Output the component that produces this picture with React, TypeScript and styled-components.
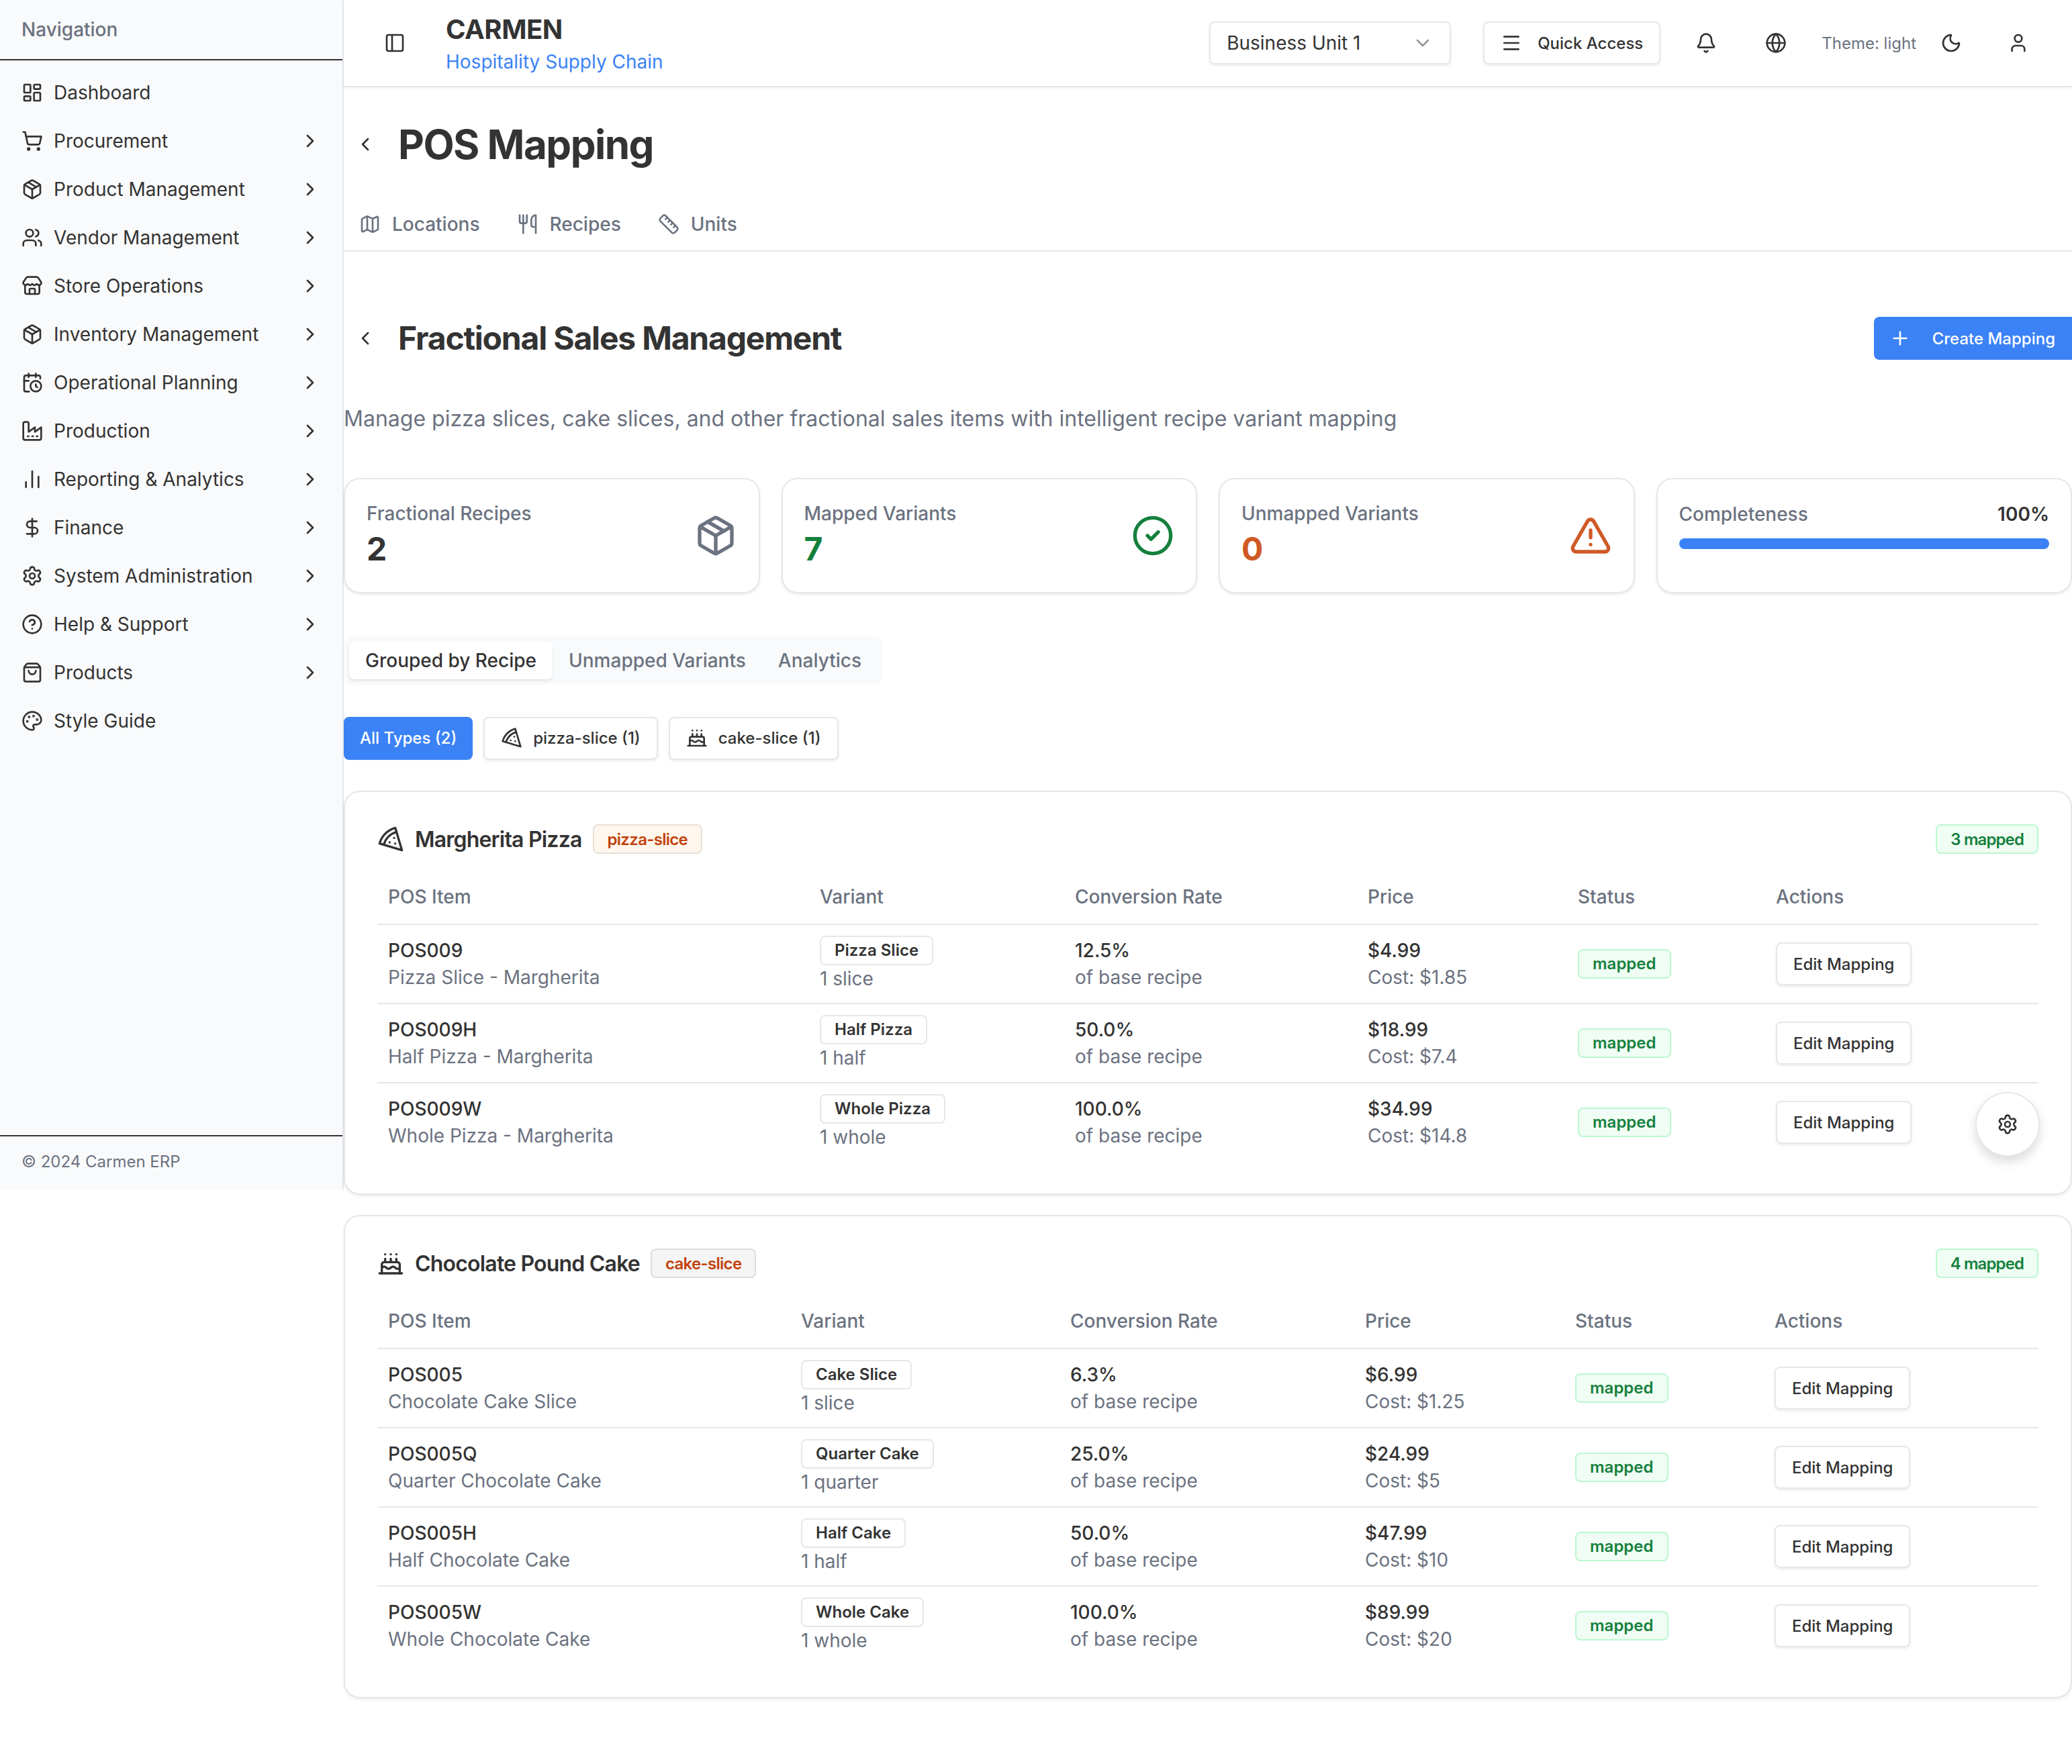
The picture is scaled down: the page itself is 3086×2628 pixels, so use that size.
import React from "react";
import styled, { createGlobalStyle } from "styled-components";
import {
  Bell,
  Cake,
  CalendarClock,
  ChartNoAxesColumn,
  ChevronDown,
  ChevronLeft,
  ChevronRight,
  CircleCheck,
  CircleHelp,
  DollarSign,
  Globe,
  LayoutDashboard,
  Map as MapIcon,
  Menu,
  Moon,
  Package,
  PanelLeft,
  Palette,
  Plus,
  Ruler,
  Settings,
  ShoppingBag,
  ShoppingCart,
  Store,
  TriangleAlert,
  User,
  Users,
  Utensils,
} from "lucide-react";

type IconProps = { size?: number };

const LineIcon = styled.svg.attrs({
  viewBox: "0 0 24 24",
  fill: "none",
  stroke: "currentColor",
  strokeWidth: 2,
  strokeLinecap: "round",
  strokeLinejoin: "round",
})``;

const PizzaIcon = ({ size = 32 }: IconProps) => (
  <LineIcon width={size} height={size}>
    <path d="M15 11h.01" />
    <path d="M11 15h.01" />
    <path d="M16 16h.01" />
    <path d="m2 16 20 6-6-20A20 20 0 0 0 2 16" />
    <path d="M5.71 17.11a17.04 17.04 0 0 1 11.4-11.4" />
  </LineIcon>
);

const FactoryIcon = ({ size = 32 }: IconProps) => (
  <LineIcon width={size} height={size}>
    <path d="M2 20a2 2 0 0 0 2 2h16a2 2 0 0 0 2-2V8l-7 5V8l-7 5V4a2 2 0 0 0-2-2H4a2 2 0 0 0-2 2Z" />
    <path d="M17 18h1" />
    <path d="M12 18h1" />
    <path d="M7 18h1" />
  </LineIcon>
);

const navItems = [
  { label: "Dashboard", icon: LayoutDashboard, leaf: true },
  { label: "Procurement", icon: ShoppingCart },
  { label: "Product Management", icon: Package },
  { label: "Vendor Management", icon: Users },
  { label: "Store Operations", icon: Store },
  { label: "Inventory Management", icon: Package },
  { label: "Operational Planning", icon: CalendarClock },
  { label: "Production", icon: FactoryIcon },
  { label: "Reporting & Analytics", icon: ChartNoAxesColumn },
  { label: "Finance", icon: DollarSign },
  { label: "System Administration", icon: Settings },
  { label: "Help & Support", icon: CircleHelp },
  { label: "Products", icon: ShoppingBag },
  { label: "Style Guide", icon: Palette, leaf: true },
];

const recipes = [
  {
    name: "Margherita Pizza",
    icon: PizzaIcon,
    type: "pizza-slice",
    tone: "pizza",
    mapped: "3 mapped",
    cols: "643px 380px 436px 313px 295px 1fr",
    rows: [
      ["POS009", "Pizza Slice - Margherita", "Pizza Slice", "1 slice", "12.5%", "$4.99", "Cost: $1.85"],
      ["POS009H", "Half Pizza - Margherita", "Half Pizza", "1 half", "50.0%", "$18.99", "Cost: $7.4"],
      ["POS009W", "Whole Pizza - Margherita", "Whole Pizza", "1 whole", "100.0%", "$34.99", "Cost: $14.8"],
    ],
  },
  {
    name: "Chocolate Pound Cake",
    icon: Cake,
    type: "cake-slice",
    tone: "cake",
    mapped: "4 mapped",
    cols: "615px 401px 439px 313px 297px 1fr",
    rows: [
      ["POS005", "Chocolate Cake Slice", "Cake Slice", "1 slice", "6.3%", "$6.99", "Cost: $1.25"],
      ["POS005Q", "Quarter Chocolate Cake", "Quarter Cake", "1 quarter", "25.0%", "$24.99", "Cost: $5"],
      ["POS005H", "Half Chocolate Cake", "Half Cake", "1 half", "50.0%", "$47.99", "Cost: $10"],
      ["POS005W", "Whole Chocolate Cake", "Whole Cake", "1 whole", "100.0%", "$89.99", "Cost: $20"],
    ],
  },
];

export default function App() {
  return (
    <Page>
      <GlobalStyle />
      <Sidebar>
        <SidebarTitle>Navigation</SidebarTitle>
        <Nav>
          {navItems.map((item) => (
            <NavItem key={item.label}>
              <item.icon size={32} />
              <span>{item.label}</span>
              {!item.leaf && <NavChevron size={32} />}
            </NavItem>
          ))}
        </Nav>
        <SidebarFooter>© 2024 Carmen ERP</SidebarFooter>
      </Sidebar>

      <Main>
        <TopBar>
          <IconBox $width={56}>
            <PanelLeft size={32} />
          </IconBox>
          <Brand>
            <BrandName>CARMEN</BrandName>
            <BrandSub>Hospitality Supply Chain</BrandSub>
          </Brand>
          <UnitSelect>
            Business Unit 1
            <ChevronDown size={32} />
          </UnitSelect>
          <QuickAccess>
            <Menu size={32} />
            Quick Access
          </QuickAccess>
          <IconBox $width={80} $left={28}>
            <Bell size={32} />
          </IconBox>
          <IconBox $width={80} $left={24}>
            <Globe size={32} />
          </IconBox>
          <ThemeLabel>Theme: light</ThemeLabel>
          <IconBox $width={80} $left={12}>
            <Moon size={32} />
          </IconBox>
          <IconBox $width={80} $left={20}>
            <User size={32} />
          </IconBox>
        </TopBar>

        <TitleRow>
          <ChevronLeft size={32} />
          <PageTitle>POS Mapping</PageTitle>
        </TitleRow>
        <SectionTabs>
          <SectionTab>
            <MapIcon size={32} />
            Locations
          </SectionTab>
          <SectionTab>
            <Utensils size={32} />
            Recipes
          </SectionTab>
          <SectionTab>
            <Ruler size={32} />
            Units
          </SectionTab>
        </SectionTabs>

        <SubHeader>
          <SubTitleGroup>
            <ChevronLeft size={32} />
            <SubTitle>Fractional Sales Management</SubTitle>
          </SubTitleGroup>
          <CreateButton>
            <Plus size={32} />
            Create Mapping
          </CreateButton>
        </SubHeader>
        <Description>
          Manage pizza slices, cake slices, and other fractional sales items with intelligent recipe variant mapping
        </Description>

        <Stats>
          <StatCard>
            <StatText>
              <StatLabel>Fractional Recipes</StatLabel>
              <StatValue>2</StatValue>
            </StatText>
            <Package size={64} color="#6b7280" />
          </StatCard>
          <StatCard>
            <StatText>
              <StatLabel>Mapped Variants</StatLabel>
              <StatValue $color="#15803d">7</StatValue>
            </StatText>
            <CircleCheck size={64} color="#15803d" />
          </StatCard>
          <StatCard>
            <StatText>
              <StatLabel>Unmapped Variants</StatLabel>
              <StatValue $color="#cf5a26">0</StatValue>
            </StatText>
            <TriangleAlert size={64} color="#cf5a26" />
          </StatCard>
          <ProgressCard>
            <ProgressHead>
              <StatLabel>Completeness</StatLabel>
              <ProgressValue>100%</ProgressValue>
            </ProgressHead>
            <ProgressBar />
          </ProgressCard>
        </Stats>

        <ViewTabs>
          <ViewTab $active>Grouped by Recipe</ViewTab>
          <ViewTab>Unmapped Variants</ViewTab>
          <ViewTab>Analytics</ViewTab>
        </ViewTabs>

        <Filters>
          <FilterButton $active>All Types (2)</FilterButton>
          <FilterButton>
            <PizzaIcon size={32} />
            pizza-slice (1)
          </FilterButton>
          <FilterButton>
            <Cake size={32} />
            cake-slice (1)
          </FilterButton>
        </Filters>

        <Recipes>
          {recipes.map((recipe) => (
            <RecipeCard key={recipe.name}>
              <RecipeHead>
                <recipe.icon size={40} />
                <RecipeName>{recipe.name}</RecipeName>
                <TypeBadge $tone={recipe.tone}>{recipe.type}</TypeBadge>
                <CountBadge>{recipe.mapped}</CountBadge>
              </RecipeHead>
              <HeadRow $cols={recipe.cols}>
                <span>POS Item</span>
                <span>Variant</span>
                <span>Conversion Rate</span>
                <span>Price</span>
                <span>Status</span>
                <span>Actions</span>
              </HeadRow>
              {recipe.rows.map((row) => (
                <Row key={row[0]} $cols={recipe.cols}>
                  <Cell>
                    <Strong>{row[0]}</Strong>
                    <Muted>{row[1]}</Muted>
                  </Cell>
                  <Cell>
                    <VariantBadge>{row[2]}</VariantBadge>
                    <Muted>{row[3]}</Muted>
                  </Cell>
                  <Cell>
                    <Strong>{row[4]}</Strong>
                    <Muted>of base recipe</Muted>
                  </Cell>
                  <Cell>
                    <Strong>{row[5]}</Strong>
                    <Muted>{row[6]}</Muted>
                  </Cell>
                  <Cell>
                    <MappedBadge>mapped</MappedBadge>
                  </Cell>
                  <Cell>
                    <EditButton>Edit Mapping</EditButton>
                  </Cell>
                </Row>
              ))}
            </RecipeCard>
          ))}
        </Recipes>
      </Main>

      <FloatingButton>
        <Settings size={32} />
      </FloatingButton>
    </Page>
  );
}

const GlobalStyle = createGlobalStyle`
  html, body {
    margin: 0;
    background: #ffffff;
  }
  body {
    font-family: Inter, "Noto Sans", sans-serif;
    color: #333333;
  }
  * {
    box-sizing: border-box;
  }
  svg {
    flex-shrink: 0;
    display: block;
  }
`;

const Page = styled.div`
  position: relative;
  display: flex;
  align-items: flex-start;
  width: 3086px;
  height: 2628px;
  overflow: hidden;
`;

const Sidebar = styled.aside`
  display: flex;
  flex-direction: column;
  flex-shrink: 0;
  width: 512px;
  height: 1772px;
  background: #f9fafb;
  border-right: 2px solid #e5e7eb;
`;

const SidebarTitle = styled.div`
  height: 90px;
  padding: 24px 32px 0;
  font-size: 28px;
  line-height: 40px;
  font-weight: 500;
  color: #6b7280;
  border-bottom: 2px solid #333333;
`;

const Nav = styled.nav`
  flex: 1;
  padding-top: 12px;
`;

const NavItem = styled.div`
  display: flex;
  align-items: center;
  gap: 16px;
  height: 72px;
  padding: 0 32px;
  font-size: 28px;
  color: #333333;
`;

const NavChevron = styled(ChevronRight)`
  margin-left: auto;
`;

const SidebarFooter = styled.div`
  height: 81px;
  padding: 18px 32px;
  font-size: 24px;
  line-height: 40px;
  color: #6b7280;
  border-top: 2px solid #333333;
`;

const Main = styled.main`
  flex: 1;
  min-width: 0;
`;

const TopBar = styled.header`
  display: flex;
  align-items: center;
  height: 130px;
  padding: 0 40px 0 48px;
  background: #ffffff;
  border-bottom: 2px solid #e5e7eb;
  box-shadow: 0 2px 4px rgba(0, 0, 0, 0.06);
`;

const IconBox = styled.div<{ $width: number; $left?: number }>`
  display: flex;
  align-items: center;
  justify-content: center;
  width: ${(p) => p.$width}px;
  height: 80px;
  margin-left: ${(p) => p.$left ?? 0}px;
  color: #333333;
`;

const Brand = styled.div`
  margin-left: 48px;
  margin-right: auto;
  padding-top: 6px;
`;

const BrandName = styled.div`
  font-size: 40px;
  line-height: 44px;
  font-weight: 700;
  letter-spacing: -0.5px;
`;

const BrandSub = styled.div`
  margin-top: 6px;
  font-size: 28px;
  line-height: 40px;
  color: #3b82f6;
`;

const UnitSelect = styled.div`
  display: flex;
  align-items: center;
  justify-content: space-between;
  width: 360px;
  height: 64px;
  padding: 0 24px;
  font-size: 28px;
  border: 2px solid #e5e7eb;
  border-radius: 8px;
  box-shadow: 0 2px 4px rgba(0, 0, 0, 0.08);

  svg {
    opacity: 0.5;
  }
`;

const QuickAccess = styled.button`
  display: flex;
  align-items: center;
  gap: 23px;
  height: 64px;
  margin-left: 48px;
  padding: 0 24px;
  font: 500 24px Inter, sans-serif;
  color: #333333;
  background: #ffffff;
  border: 2px solid #e5e7eb;
  border-radius: 8px;
  box-shadow: 0 2px 4px rgba(0, 0, 0, 0.08);
`;

const ThemeLabel = styled.span`
  margin-left: 28px;
  font-size: 24px;
  color: #6b7280;
`;

const TitleRow = styled.div`
  display: flex;
  align-items: center;
  gap: 33px;
  margin-top: 49px;
  padding-left: 16px;
`;

const PageTitle = styled.h1`
  margin: 0;
  font-size: 60px;
  line-height: 72px;
  font-weight: 700;
  letter-spacing: -1.5px;
`;

const SectionTabs = styled.div`
  display: flex;
  gap: 55px;
  height: 80px;
  margin-top: 44px;
  padding-left: 23px;
  border-bottom: 2px solid #e5e7eb;
`;

const SectionTab = styled.div`
  display: flex;
  align-items: center;
  gap: 17px;
  height: 78px;
  font-size: 28px;
  font-weight: 500;
  color: #6b7280;
`;

const SubHeader = styled.div`
  display: flex;
  align-items: center;
  justify-content: space-between;
  margin-top: 97px;
  padding-left: 16px;
`;

const SubTitleGroup = styled.div`
  display: flex;
  align-items: center;
  gap: 33px;
`;

const SubTitle = styled.h2`
  margin: 0;
  font-size: 48px;
  line-height: 64px;
  font-weight: 700;
  letter-spacing: -1.2px;
`;

const CreateButton = styled.button`
  display: flex;
  align-items: center;
  gap: 32px;
  height: 64px;
  padding: 0 25px 0 23px;
  font: 500 24px Inter, sans-serif;
  color: #ffffff;
  background: #3b82f6;
  border: 0;
  border-radius: 8px 0 0 8px;
`;

const Description = styled.p`
  margin: 64px 0 0;
  font-size: 32px;
  line-height: 48px;
  color: #6b7280;
`;

const Stats = styled.div`
  display: grid;
  grid-template-columns: repeat(4, 1fr);
  gap: 32px;
  margin-top: 64px;
`;

const StatCard = styled.div`
  display: flex;
  align-items: center;
  justify-content: space-between;
  height: 172px;
  padding: 0 32px;
  background: #ffffff;
  border: 2px solid #e5e7eb;
  border-radius: 24px;
  box-shadow: 0 2px 4px rgba(0, 0, 0, 0.08);
`;

const StatText = styled.div`
  padding-bottom: 3px;
`;

const StatLabel = styled.div`
  font-size: 28px;
  line-height: 40px;
  font-weight: 500;
  color: #6b7280;
`;

const StatValue = styled.div<{ $color?: string }>`
  margin-top: 3px;
  font-size: 48px;
  line-height: 60px;
  font-weight: 700;
  color: ${(p) => p.$color ?? "#333333"};
`;

const ProgressCard = styled(StatCard)`
  display: block;
  padding-top: 32px;
`;

const ProgressHead = styled.div`
  display: flex;
  align-items: center;
  justify-content: space-between;
`;

const ProgressValue = styled.span`
  font-size: 28px;
  line-height: 40px;
  font-weight: 600;
`;

const ProgressBar = styled.div`
  height: 16px;
  margin-top: 16px;
  background: #3b82f6;
  border-radius: 8px;
`;

const ViewTabs = styled.div`
  display: flex;
  align-items: center;
  width: fit-content;
  height: 72px;
  margin-top: 64px;
  padding: 0 8px;
  background: #f9fafb;
  border-radius: 12px;
`;

const ViewTab = styled.div<{ $active?: boolean }>`
  display: flex;
  align-items: center;
  height: 56px;
  padding: 0 24px;
  font-size: 28px;
  font-weight: 500;
  color: ${(p) => (p.$active ? "#333333" : "#6b7280")};
  background: ${(p) => (p.$active ? "#ffffff" : "transparent")};
  border-radius: 8px;
  box-shadow: ${(p) => (p.$active ? "0 2px 4px rgba(0, 0, 0, 0.1)" : "none")};
`;

const Filters = styled.div`
  display: flex;
  gap: 16px;
  margin-top: 48px;
`;

const FilterButton = styled.button<{ $active?: boolean }>`
  display: flex;
  align-items: center;
  gap: 16px;
  height: 64px;
  padding: 0 24px 2px;
  font: 500 24px Inter, sans-serif;
  color: ${(p) => (p.$active ? "#ffffff" : "#333333")};
  background: ${(p) => (p.$active ? "#3b82f6" : "#ffffff")};
  border: ${(p) => (p.$active ? "0" : "2px solid #e5e7eb")};
  border-radius: 8px;
  box-shadow: ${(p) => (p.$active ? "0 1px 2px rgba(0, 0, 0, 0.05)" : "0 2px 4px rgba(0, 0, 0, 0.08)")};
`;

const Recipes = styled.div`
  display: flex;
  flex-direction: column;
  gap: 30px;
  margin-top: 46px;
`;

const RecipeCard = styled.section`
  padding: 48px;
  background: #ffffff;
  border: 2px solid #e5e7eb;
  border-radius: 24px;
  box-shadow: 0 2px 4px rgba(0, 0, 0, 0.08);
`;

const RecipeHead = styled.div`
  display: flex;
  align-items: center;
  gap: 16px;
  height: 44px;
  margin-bottom: 24px;
`;

const RecipeName = styled.h3`
  margin: 0;
  font-size: 32px;
  font-weight: 600;
  letter-spacing: -0.8px;
`;

const TypeBadge = styled.span<{ $tone: string }>`
  display: inline-flex;
  align-items: center;
  height: 44px;
  padding: 0 20px;
  font-size: 24px;
  font-weight: 600;
  letter-spacing: -0.7px;
  color: #c2410c;
  background: ${(p) => (p.$tone === "pizza" ? "#fff7ed" : "#f5f5f5")};
  border: 2px solid ${(p) => (p.$tone === "pizza" ? "#e8dfd6" : "#dedcda")};
  border-radius: 8px;
`;

const MappedBadge = styled.span`
  display: inline-flex;
  align-items: center;
  height: 44px;
  padding: 0 20px;
  font-size: 24px;
  font-weight: 600;
  color: #15803d;
  background: #f0fdf4;
  border: 2px solid #bbf7d0;
  border-radius: 8px;
`;

const CountBadge = styled(MappedBadge)`
  margin-left: auto;
  letter-spacing: -0.9px;
`;

const HeadRow = styled.div<{ $cols: string }>`
  display: grid;
  grid-template-columns: ${(p) => p.$cols};
  align-items: center;
  height: 82px;
  font-size: 28px;
  font-weight: 500;
  color: #6b7280;
  border-bottom: 2px solid #e5e7eb;

  span {
    padding-left: 16px;
  }
`;

const Row = styled.div<{ $cols: string }>`
  display: grid;
  grid-template-columns: ${(p) => p.$cols};
  align-items: center;
  height: 118px;
  font-size: 28px;
  line-height: 40px;
  border-bottom: 2px solid #e5e7eb;

  &:last-child {
    height: 116px;
    border-bottom: 0;
  }
`;

const Cell = styled.div`
  display: flex;
  flex-direction: column;
  align-items: flex-start;
  padding-left: 16px;
`;

const Strong = styled.div`
  font-weight: 500;
`;

const Muted = styled.div`
  color: #6b7280;
`;

const VariantBadge = styled.span`
  display: inline-flex;
  align-items: center;
  height: 44px;
  padding: 0 20px;
  font-size: 24px;
  font-weight: 600;
  background: #ffffff;
  border: 2px solid #e5e7eb;
  border-radius: 8px;
`;

const EditButton = styled.button`
  height: 64px;
  padding: 0 24px;
  font: 500 24px Inter, sans-serif;
  color: #333333;
  background: #ffffff;
  border: 2px solid #e5e7eb;
  border-radius: 8px;
  box-shadow: 0 2px 4px rgba(0, 0, 0, 0.08);
`;

const FloatingButton = styled.button`
  position: absolute;
  top: 1627px;
  right: 48px;
  display: flex;
  align-items: center;
  justify-content: center;
  width: 96px;
  height: 96px;
  color: #333333;
  background: #ffffff;
  border: 2px solid #e5e7eb;
  border-radius: 50%;
  box-shadow: 0 8px 16px rgba(0, 0, 0, 0.14);
`;
